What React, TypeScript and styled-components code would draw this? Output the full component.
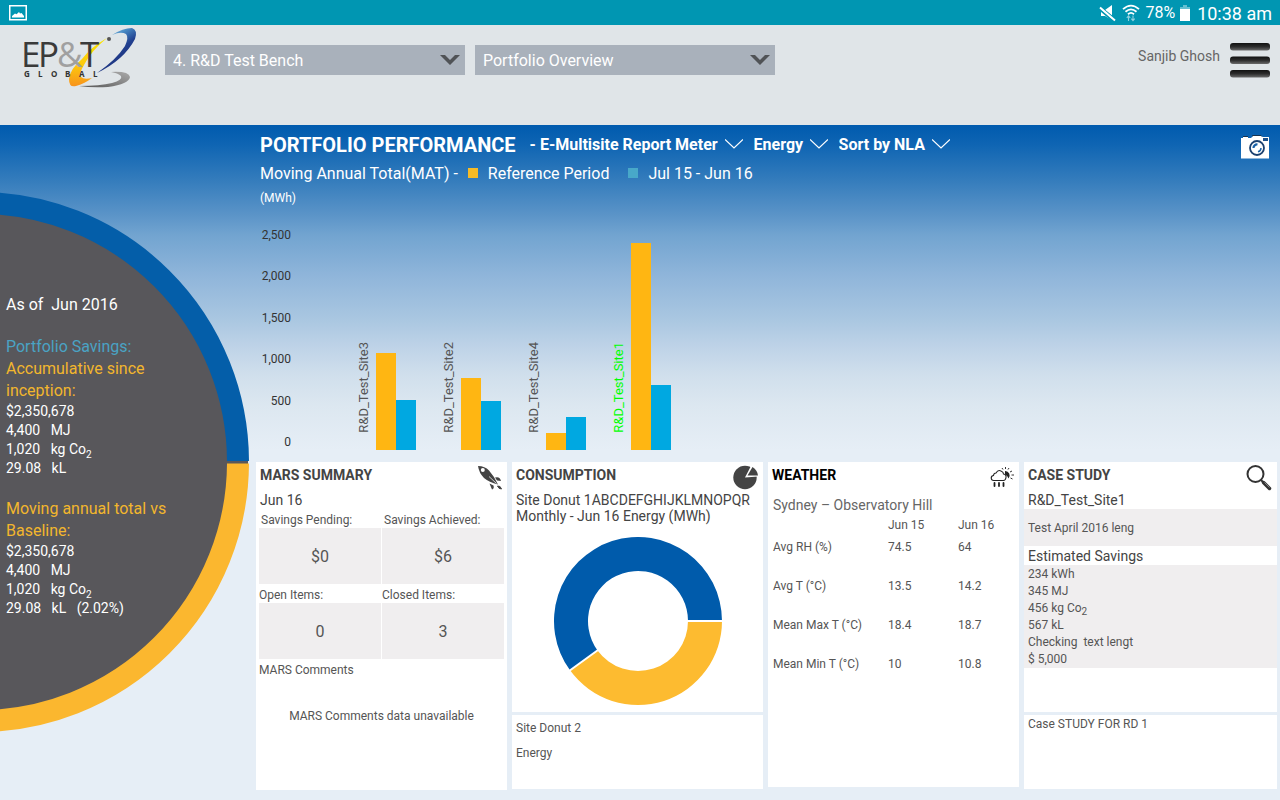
import React from "react";
import styled, { createGlobalStyle } from "styled-components";

const colors = {
  blue: "#005bab",
  amber: "#fdbb30",
  band: "#f0eeef",
  page: "#e6eef6",
  text: "#555555",
  strong: "#444444",
};

const GlobalStyle = createGlobalStyle`
  *, *::before, *::after { box-sizing: border-box; }
  body {
    margin: 0;
    background: ${colors.page};
    font-family: Roboto, "Noto Sans", sans-serif;
    color: ${colors.text};
  }
  h1, h2, h3, p, dl, dd, ul, table { margin: 0; padding: 0; }
  ul { list-style: none; }
  sub { font-size: 10px; line-height: 1px; }
  button, select { font: inherit; color: inherit; border: 0; background: none; padding: 0; }
  svg { display: block; flex: none; }
`;

const Page = styled.div`
  min-height: 100vh;
  display: flex;
  flex-direction: column;
`;

/* ---------- device status bar ---------- */

const StatusBar = styled.div`
  height: 25px;
  padding: 0 8px 0 9px;
  display: flex;
  align-items: center;
  justify-content: space-between;
  background: #0096b2;
  color: #ffffff;
`;

const StatusGroup = styled.div`
  display: flex;
  align-items: center;
  gap: 5px;
`;

const Battery = styled.span`
  font-size: 16px;
  line-height: 24px;
`;

const Clock = styled.time`
  padding: 2px 0 0 2px;
  font-size: 18px;
  line-height: 24px;
`;

/* ---------- header ---------- */

const Header = styled.header`
  height: 100px;
  padding: 0 10px 0 20px;
  display: flex;
  align-items: flex-start;
  background: #e0e5e8;
`;

const Pickers = styled.div`
  flex: 1;
  display: flex;
  gap: 10px;
  padding: 20px 20px 0 25px;
`;

const PickerFrame = styled.div`
  flex: 0 1 300px;
  display: grid;
  align-items: center;
  background: #a9b1bb;
  > * { grid-area: 1 / 1; }
  > svg { justify-self: end; margin-right: 5px; pointer-events: none; }
`;

const PickerSelect = styled.select`
  appearance: none;
  width: 100%;
  height: 30px;
  padding: 0 30px 0 8px;
  color: #ffffff;
  font-size: 16px;
`;

const UserArea = styled.div`
  display: flex;
  align-items: flex-start;
  gap: 10px;
  padding-top: 17px;
`;

const UserName = styled.span`
  padding-top: 4px;
  font-size: 14px;
  line-height: 20px;
  color: #666666;
`;

const IconButton = styled.button`
  display: block;
  cursor: pointer;
`;

/* ---------- body ---------- */

const Body = styled.div`
  flex: 1;
  display: flex;
  background: linear-gradient(
    to bottom,
    #005bae 0,
    #0f65b3 20px,
    #347cbc 55px,
    #5b94c8 90px,
    #72a4d0 110px,
    #8fb5da 150px,
    #aac7e1 195px,
    #bdd2e7 220px,
    #d0dfec 250px,
    #dce7f0 280px,
    ${colors.page} 325px
  );
`;

const Dial = styled.aside`
  flex: none;
  width: 250px;
  padding-top: 67px;
  display: grid;
  align-items: start;
  overflow: hidden;
  > * { grid-area: 1 / 1; }
`;

const DialText = styled.div`
  padding: 102px 60px 0 6px;
  display: flex;
  flex-direction: column;
  gap: 20px;
  color: #ffffff;
`;

const DialLine = styled.p<{ $tone?: string }>`
  font-size: 16px;
  line-height: 22px;
  white-space: pre;
  color: ${(p) => p.$tone ?? "#ffffff"};
`;

const DialFigure = styled.p`
  font-size: 14px;
  line-height: 19px;
  white-space: pre;
`;

const Content = styled.main`
  flex: 1;
  min-width: 0;
`;

/* ---------- chart ---------- */

const ChartPanel = styled.section`
  height: 337px;
  padding: 8px 11px 12px 10px;
  display: flex;
  flex-direction: column;
  color: #ffffff;
`;

const ChartHeader = styled.div`
  height: 26px;
  display: flex;
  align-items: flex-start;
`;

const ChartTitle = styled.h1`
  margin-right: 14px;
  font-size: 20px;
  line-height: 24px;
  font-weight: 700;
`;

const Filters = styled.div`
  flex: 1;
  display: flex;
  gap: 11px;
`;

const FilterFrame = styled.div`
  display: grid;
  align-items: center;
  > * { grid-area: 1 / 1; }
  > svg { justify-self: end; pointer-events: none; }
`;

const FilterSelect = styled.select`
  appearance: none;
  height: 22px;
  padding-right: 24px;
  font-size: 16px;
  font-weight: 700;
  option { color: #333333; }
`;

const Legend = styled.div`
  display: flex;
  align-items: center;
  height: 28px;
  font-size: 16px;
`;

const Swatch = styled.span<{ $color: string }>`
  width: 10px;
  height: 10px;
  margin: 0 10px;
  background: ${(p) => p.$color};
`;

const LegendEntry = styled.span`
  display: flex;
  align-items: center;
  margin-right: 9px;
`;

const Unit = styled.p`
  padding-top: 3px;
  font-size: 12px;
  line-height: 16px;
`;

const Plot = styled.div`
  flex: 1;
  display: flex;
  align-items: flex-end;
`;

const Axis = styled.ul`
  width: 31px;
  height: 223px;
  display: flex;
  flex-direction: column;
  justify-content: space-between;
  text-align: right;
  font-size: 12px;
  line-height: 16px;
  color: #333333;
`;

const Groups = styled.div`
  display: flex;
  align-items: flex-end;
  gap: 23px;
  padding-left: 63px;
`;

const Group = styled.div`
  display: flex;
  align-items: flex-end;
`;

const GroupLabel = styled.span<{ $active?: boolean }>`
  width: 22px;
  padding-top: 17px;
  writing-mode: vertical-rl;
  transform: rotate(180deg);
  font-size: 13px;
  line-height: 20px;
  color: ${(p) => (p.$active ? "#00ff00" : colors.text)};
`;

const Bar = styled.div<{ $color: string }>`
  width: 20px;
  background: ${(p) => p.$color};
`;

/* ---------- cards ---------- */

const Cards = styled.div`
  display: grid;
  grid-template-columns: 251fr 251fr 251fr 253fr;
  gap: 5px;
  align-items: start;
  padding: 0 3px 10px 6px;
`;

const Stack = styled.div`
  display: flex;
  flex-direction: column;
  gap: 3px;
`;

const Card = styled.section<{ $min: number }>`
  min-height: ${(p) => p.$min}px;
  background: #ffffff;
  font-size: 12px;
  line-height: 16px;
`;

const CardHeader = styled.div`
  height: 30px;
  padding: 3px 5px 0 4px;
  display: flex;
  justify-content: space-between;
  align-items: flex-start;
`;

const CardTitle = styled.h2<{ $color?: string }>`
  font-size: 14px;
  line-height: 21px;
  font-weight: 700;
  color: ${(p) => p.$color ?? colors.strong};
`;

const SubTitle = styled.p`
  padding: 0 4px 1px;
  font-size: 14px;
  line-height: 16px;
  color: ${colors.strong};
`;

const Stats = styled.dl`
  display: grid;
  grid-template-columns: 1fr 1fr;
  column-gap: 1px;
  margin: 0 3px;
`;

const StatLabel = styled.dt<{ $indent?: boolean }>`
  padding: 3px 0 0 ${(p) => (p.$indent ? 2 : 0)}px;
`;

const StatValue = styled.dd`
  height: 56px;
  padding-top: 1px;
  display: flex;
  align-items: center;
  justify-content: center;
  background: ${colors.band};
  font-size: 16px;
`;

const Comments = styled.div`
  padding: 3px 3px 0;
`;

const Empty = styled.p`
  margin-top: 30px;
  text-align: center;
`;

const DonutBox = styled.div`
  display: flex;
  justify-content: center;
  padding: 12px 0 6px;
`;

const Notes = styled.div`
  padding: 5px 4px;
  display: flex;
  flex-direction: column;
  gap: 9px;
`;

const Note = styled.p`
  padding: 1px 4px;
`;

const Weather = styled.div`
  padding: 5px;
`;

const Station = styled.h3`
  font-size: 14px;
  line-height: 16px;
  font-weight: 400;
  color: #666666;
`;

const WeatherTable = styled.table`
  width: 100%;
  margin-top: 4px;
  table-layout: fixed;
  border-collapse: collapse;
  th, td {
    padding: 0;
    vertical-align: top;
    text-align: left;
    font-weight: 400;
  }
  thead tr { height: 22px; }
  tbody tr { height: 39px; }
  thead th:first-child { width: 115px; }
  thead th:nth-child(2) { width: 70px; }
`;

const Band = styled.div<{ $tall?: boolean }>`
  padding: ${(p) => (p.$tall ? "11px 4px 9px" : "1px 4px 0")};
  background: ${colors.band};
  line-height: 17px;
  white-space: pre;
`;

const BandTitle = styled.h3`
  padding: 2px 4px 1px;
  font-size: 14px;
  line-height: 16px;
  font-weight: 400;
  color: ${colors.strong};
`;

/* ---------- icons ---------- */

const PictureIcon = () => (
  <svg width="18" height="16" viewBox="0 0 18 16" aria-hidden="true">
    <rect x="0.75" y="0.75" width="16.5" height="14" fill="none" stroke="#fff" strokeWidth="1.5" />
    <path d="M3 12.5V11l3-2.5 1.5.8L10 7l1 1.5 1.5-.5L15 11v1.5z" fill="#fff" />
  </svg>
);

const MuteIcon = () => (
  <svg width="18" height="18" viewBox="0 0 18 18" aria-hidden="true">
    <path d="M2 6h4l7-5v15l-7-4H2z" fill="#fff" />
    <path d="M0 5L16 18.500" stroke="#0096b2" strokeWidth="2" />
    <path d="M0 2L16 15" stroke="#0096b2" strokeWidth="2" />
    <path d="M1 3.500L16 16.500" stroke="#fff" strokeWidth="2" />
  </svg>
);

const WifiIcon = () => (
  <svg width="18" height="18" viewBox="0 0 18 18" fill="none" aria-hidden="true">
    <g stroke="#fff" strokeWidth="1.8">
      <path d="M1 5.200Q9-2 17 5.200" />
      <path d="M3.500 7.800Q9 3 14.500 7.800" />
      <path d="M6 10.200Q9 7.600 12 10.200" />
    </g>
    <path d="M6.500 12v5M4.800 13.800l1.700-2 1.700 2M11 11.500v5M9.300 14.700l1.700 2 1.700-2" stroke="#8fd0de" strokeWidth="1.100" />
  </svg>
);

const BatteryIcon = () => (
  <svg width="10" height="16" viewBox="0 0 10 16" aria-hidden="true">
    <path d="M3 0h4v2h3v3H0V2h3z" fill="#66c0d1" />
    <rect y="4" width="10" height="12" fill="#fff" />
  </svg>
);

const Logo = () => (
  <svg width="120" height="64" viewBox="20 25 120 64" role="img" aria-label="EP&T Global">
    <defs>
      <linearGradient id="logoBlue" x1="0" y1="0" x2="0.6" y2="1">
        <stop offset="0" stopColor="#c5eaf3" />
        <stop offset="0.35" stopColor="#4a8dc6" />
        <stop offset="0.6" stopColor="#21408f" />
        <stop offset="1" stopColor="#1f2d77" />
      </linearGradient>
      <linearGradient id="logoGold" x1="0" y1="0" x2="0" y2="1">
        <stop offset="0" stopColor="#f9e600" />
        <stop offset="0.55" stopColor="#fdc90c" />
        <stop offset="1" stopColor="#f7931d" />
      </linearGradient>
      <linearGradient id="logoGrey" x1="0" y1="1" x2="1" y2="0">
        <stop offset="0" stopColor="#555" />
        <stop offset="0.6" stopColor="#8a8a8a" />
        <stop offset="1" stopColor="#aaa" />
      </linearGradient>
    </defs>
    <path d="M107 38Q91 47 82 59Q70 69 69 79Q69 88 76 86Q84 84 92 78Q84 80 81 77Q79 73 84 65Q91 51 107 38Z" fill="url(#logoGold)" />
    <path d="M112 35Q123 28 132 28Q138 30 135 39Q124 60 97 73Q116 60 125 46Q129 37 126 34Q121 31 112 35Z" fill="url(#logoBlue)" />
    <path d="M111 72Q129 71 130 77Q129 84 108 87Q92 88 79 86Q100 86 112 83Q123 80 121 76Q118 73 111 72Z" fill="url(#logoGrey)" />
    <g fontFamily="'Open Sans', sans-serif" fontSize="35" fill="#3a3a3a">
      <text x="21" y="67">E</text>
      <text x="38" y="67">P</text>
      <text x="57" y="67" fill="#a0a0a0">&amp;</text>
      <text x="80" y="67">T</text>
    </g>
    <circle cx="109" cy="39" r="2" fill="#555" />
    <text x="24 38 51 65 79 93" y="77" fontFamily="'Open Sans', sans-serif" fontSize="8" fontWeight="700" fill="#333">GLOBAL</text>
  </svg>
);

const PickerArrow = () => (
  <svg width="20" height="12" viewBox="0 0 20 12" aria-hidden="true">
    <path d="M0 1h5l5 5 5-5h5L10 11z" fill="#505356" />
  </svg>
);

const FilterArrow = () => (
  <svg width="18" height="10" viewBox="0 0 18 10" aria-hidden="true">
    <path d="M0 0.500L9 9l9-8.500" fill="none" stroke="#fff" strokeWidth="1.200" />
  </svg>
);

const MenuIcon = () => (
  <svg width="40" height="36" viewBox="0 0 40 36" aria-hidden="true">
    <defs>
      <linearGradient id="menuBar" x1="0" y1="0" x2="0" y2="1">
        <stop offset="0" stopColor="#111" />
        <stop offset="0.5" stopColor="#2c2c2c" />
        <stop offset="1" stopColor="#6a6a6a" />
      </linearGradient>
    </defs>
    {[1, 14.5, 28].map((y) => (
      <rect key={y} y={y} width="40" height="7.5" rx="3" fill="url(#menuBar)" />
    ))}
  </svg>
);

const CameraIcon = () => (
  <svg width="28" height="26" viewBox="0 0 28 26" aria-hidden="true">
    <path d="M0 5h2V4h5v1h3l2-2h8l2 1h6v21.500H0z" fill="#fff" />
    <path d="M2 3.500h5M11 3l1-.5h8l1 1" stroke="#17324d" fill="none" />
    <rect x="22" y="5" width="5" height="3" fill="#1a4f8a" />
    <circle cx="16" cy="15" r="7" fill="none" stroke="#1a4070" strokeWidth="1.8" />
    <path d="M12.500 15a3.500 3.500 0 0 1 4-3.500" fill="none" stroke="#1a62a8" strokeWidth="2.200" />
    <path d="M20 15a4 4 0 0 1-3 3.800" fill="none" stroke="#1a62a8" strokeWidth="1.500" />
  </svg>
);

const RocketIcon = () => (
  <svg width="25" height="25" viewBox="0 0 25 25" aria-hidden="true">
    <path d="M1 1Q8 1 12 5.500Q17 11 21 19.500Q12 17 7 13Q2 8 1 1Z" fill="#444" />
    <circle cx="5.800" cy="5" r="2" fill="#fff" />
    <path d="M12 11.500l7.500 7" stroke="#ddd" strokeWidth="0.900" />
    <path d="M18 12.500q5-1.500 6 3.500l-4-.5zM12.500 18.500l4 2q1 3-1.500 4z" fill="#444" />
    <path d="M20.500 21q3-.5 4 3-3 0-4-3z" fill="#444" stroke="#444" />
  </svg>
);

const PieIcon = () => (
  <svg width="25" height="25" viewBox="0 0 25 25" aria-hidden="true">
    <circle cx="12" cy="12.500" r="11.700" fill="#444" />
    <path d="M12 12.500L19-1H26V11.500z" fill="#fff" />
    <path d="M14.500 10.500L19.500 2Q24.500 5.500 25 10.500z" fill="#444" />
  </svg>
);

const WeatherIcon = () => (
  <svg width="24" height="25" viewBox="0 0 24 25" aria-hidden="true">
    <path d="M15 6a4.500 4.500 0 0 1 3.500 7.500q-1-3-3.500-4z" fill="#222" />
    <g stroke="#333" strokeWidth="1">
      <path d="M15.500 2v2M19 3l-1 1.500M22 6l-2 1M21.500 10H24M20.500 13l2 1M12 3l1 1.500" />
    </g>
    <path d="M4 15.500a2.500 2.500 0 0 1-.5-5q.3-2.500 2.500-2.500Q8 4.500 11 6q2.500 1 2.500 3 3 .5 2.500 3.500-.5 3-2.500 3z" fill="#fff" stroke="#222" strokeWidth="1.100" />
    <path d="M4.500 18v3M9 18v3M13.500 18v3" stroke="#222" strokeWidth="1.800" strokeLinecap="round" />
  </svg>
);

const SearchIcon = () => (
  <svg width="26" height="26" viewBox="0 0 26 26" aria-hidden="true">
    <circle cx="9.500" cy="9" r="8" fill="none" stroke="#333" strokeWidth="2" />
    <path d="M15 15l2.500 2.500" stroke="#333" strokeWidth="2" />
    <path d="M17.500 17.500l6 6" stroke="#333" strokeWidth="3.500" strokeLinecap="round" />
    <path d="M18.500 17.500l5 5" stroke="#999" strokeWidth="0.800" />
  </svg>
);

/* Half ring that hangs off the left edge: the circle is centred 21px outside the panel. */
const DialRing = () => (
  <svg width="250" height="540" viewBox="0 0 250 540" aria-hidden="true">
    <circle cx="-21" cy="270" r="269" fill="#58575b" />
    <path d="M-21 11A259 259 0 0 1 238 269" fill="none" stroke="#045ea9" strokeWidth="22" />
    <path d="M238 271.500A259 259 0 0 1-21 529" fill="none" stroke="#fbb72f" strokeWidth="22" />
  </svg>
);

const arcPoint = (radius: number, degrees: number) => {
  const a = (degrees * Math.PI) / 180;
  return `${84 + radius * Math.cos(a)} ${84 + radius * Math.sin(a)}`;
};

const Donut = ({ share }: { share: number }) => {
  const end = share * 360;
  const slice = (from: number, to: number) => {
    const large = to - from > 180 ? 1 : 0;
    return `M${arcPoint(84, from)}A84 84 0 ${large} 1 ${arcPoint(84, to)}L${arcPoint(50, to)}A50 50 0 ${large} 0 ${arcPoint(50, from)}Z`;
  };
  return (
    <svg width="168" height="168" viewBox="0 0 168 168" role="img" aria-label="Energy by site">
      <path d={slice(end, 360)} fill={colors.blue} />
      <path d={slice(0, end)} fill={colors.amber} />
      <path d={`M${arcPoint(49, 0)}L${arcPoint(86, 0)}M${arcPoint(49, end)}L${arcPoint(86, end)}`} stroke="#fff" strokeWidth="2" />
    </svg>
  );
};

/* ---------- data ---------- */

const AXIS_MAX = 2500;
const AXIS_HEIGHT = 207;
const ticks = ["2,500", "2,000", "1,500", "1,000", "500", "0"];

const sites = [
  { name: "R&D_Test_Site3", reference: 1170, current: 605 },
  { name: "R&D_Test_Site2", reference: 870, current: 592 },
  { name: "R&D_Test_Site4", reference: 205, current: 400 },
  { name: "R&D_Test_Site1", reference: 2500, current: 785, active: true },
];

const barHeight = (value: number) => Math.round((value / AXIS_MAX) * AXIS_HEIGHT);

const weather = [
  ["Avg RH (%)", "74.5", "64"],
  ["Avg T (°C)", "13.5", "14.2"],
  ["Mean Max T (°C)", "18.4", "18.7"],
  ["Mean Min T (°C)", "10", "10.8"],
];

/* ---------- composed parts ---------- */

const Picker = ({ label, value }: { label: string; value: string }) => (
  <PickerFrame>
    <PickerSelect aria-label={label}>
      <option>{value}</option>
    </PickerSelect>
    <PickerArrow />
  </PickerFrame>
);

const Filter = ({ label, value }: { label: string; value: string }) => (
  <FilterFrame>
    <FilterSelect aria-label={label}>
      <option>{value}</option>
    </FilterSelect>
    <FilterArrow />
  </FilterFrame>
);

const Figures = ({ last }: { last: string }) => (
  <>
    <DialFigure>$2,350,678</DialFigure>
    <DialFigure>{"4,400   MJ"}</DialFigure>
    <DialFigure>
      {"1,020   kg Co"}
      <sub>2</sub>
    </DialFigure>
    <DialFigure>{last}</DialFigure>
  </>
);

const Stat = ({ label, value, indent }: { label: string; value: string; indent?: boolean }) => (
  <div>
    <StatLabel $indent={indent}>{label}</StatLabel>
    <StatValue>{value}</StatValue>
  </div>
);

export default function App() {
  return (
    <Page>
      <GlobalStyle />
      <StatusBar>
        <PictureIcon />
        <StatusGroup>
          <MuteIcon />
          <WifiIcon />
          <Battery>78%</Battery>
          <BatteryIcon />
          <Clock>10:38 am</Clock>
        </StatusGroup>
      </StatusBar>

      <Header>
        <Logo />
        <Pickers>
          <Picker label="Portfolio" value="4. R&D Test Bench" />
          <Picker label="View" value="Portfolio Overview" />
        </Pickers>
        <UserArea>
          <UserName>Sanjib Ghosh</UserName>
          <IconButton type="button" aria-label="Menu">
            <MenuIcon />
          </IconButton>
        </UserArea>
      </Header>

      <Body>
        <Dial>
          <DialRing />
          <DialText>
            <DialLine>{"As of  Jun 2016"}</DialLine>
            <div>
              <DialLine $tone="#4aa3c4">Portfolio Savings:</DialLine>
              <DialLine $tone="#f2b62d">{"Accumulative since\ninception:"}</DialLine>
              <Figures last="29.08   kL" />
            </div>
            <div>
              <DialLine $tone="#f2b62d">{"Moving annual total vs\nBaseline:"}</DialLine>
              <Figures last="29.08   kL   (2.02%)" />
            </div>
          </DialText>
        </Dial>

        <Content>
          <ChartPanel>
            <ChartHeader>
              <ChartTitle>PORTFOLIO PERFORMANCE</ChartTitle>
              <Filters>
                <Filter label="Report meter" value="- E-Multisite Report Meter" />
                <Filter label="Utility" value="Energy" />
                <Filter label="Sort order" value="Sort by NLA" />
              </Filters>
              <IconButton type="button" aria-label="Take snapshot">
                <CameraIcon />
              </IconButton>
            </ChartHeader>
            <Legend>
              <span>Moving Annual Total(MAT) -</span>
              <LegendEntry>
                <Swatch $color="#f7bb26" />
                Reference Period
              </LegendEntry>
              <LegendEntry>
                <Swatch $color="#48a8c9" />
                Jul 15 - Jun 16
              </LegendEntry>
            </Legend>
            <Unit>(MWh)</Unit>
            <Plot>
              <Axis>
                {ticks.map((t) => (
                  <li key={t}>{t}</li>
                ))}
              </Axis>
              <Groups>
                {sites.map((s) => (
                  <Group key={s.name}>
                    <GroupLabel $active={s.active}>{s.name}</GroupLabel>
                    <Bar $color="#ffb612" style={{ height: barHeight(s.reference) }} />
                    <Bar $color="#00a8e1" style={{ height: barHeight(s.current) }} />
                  </Group>
                ))}
              </Groups>
            </Plot>
          </ChartPanel>

          <Cards>
            <Card $min={328}>
              <CardHeader>
                <CardTitle>MARS SUMMARY</CardTitle>
                <RocketIcon />
              </CardHeader>
              <SubTitle>Jun 16</SubTitle>
              <Stats>
                <Stat label="Savings Pending:" value="$0" indent />
                <Stat label="Savings Achieved:" value="$6" indent />
                <Stat label="Open Items:" value="0" />
                <Stat label="Closed Items:" value="3" />
              </Stats>
              <Comments>
                <p>MARS Comments</p>
                <Empty>MARS Comments data unavailable</Empty>
              </Comments>
            </Card>

            <Stack>
              <Card $min={250}>
                <CardHeader>
                  <CardTitle>CONSUMPTION</CardTitle>
                  <PieIcon />
                </CardHeader>
                <SubTitle>
                  Site Donut 1ABCDEFGHIJKLMNOPQR
                  <br />
                  Monthly - Jun 16 Energy (MWh)
                </SubTitle>
                <DonutBox>
                  <Donut share={0.4} />
                </DonutBox>
              </Card>
              <Card $min={74}>
                <Notes>
                  <p>Site Donut 2</p>
                  <p>Energy</p>
                </Notes>
              </Card>
            </Stack>

            <Card $min={325}>
              <CardHeader>
                <CardTitle $color="#000000">WEATHER</CardTitle>
                <WeatherIcon />
              </CardHeader>
              <Weather>
                <Station>Sydney – Observatory Hill</Station>
                <WeatherTable>
                  <thead>
                    <tr>
                      <th aria-label="Measure" />
                      <th scope="col">Jun 15</th>
                      <th scope="col">Jun 16</th>
                    </tr>
                  </thead>
                  <tbody>
                    {weather.map(([name, before, now]) => (
                      <tr key={name}>
                        <th scope="row">{name}</th>
                        <td>{before}</td>
                        <td>{now}</td>
                      </tr>
                    ))}
                  </tbody>
                </WeatherTable>
              </Weather>
            </Card>

            <Stack>
              <Card $min={250}>
                <CardHeader>
                  <CardTitle>CASE STUDY</CardTitle>
                  <SearchIcon />
                </CardHeader>
                <SubTitle>R&amp;D_Test_Site1</SubTitle>
                <Band $tall>Test April 2016 leng</Band>
                <BandTitle>Estimated Savings</BandTitle>
                <Band>
                  <p>234 kWh</p>
                  <p>345 MJ</p>
                  <p>
                    456 kg Co<sub>2</sub>
                  </p>
                  <p>567 kL</p>
                  <p>{"Checking  text lengt"}</p>
                  <p>$ 5,000</p>
                </Band>
              </Card>
              <Card $min={74}>
                <Note>Case STUDY FOR RD 1</Note>
              </Card>
            </Stack>
          </Cards>
        </Content>
      </Body>
    </Page>
  );
}
